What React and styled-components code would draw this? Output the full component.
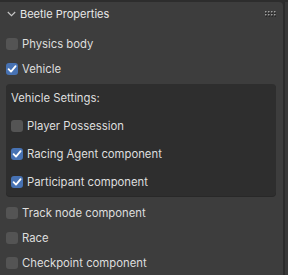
import React, { useState } from 'react';
import styled, { createGlobalStyle } from 'styled-components';

const GlobalStyle = createGlobalStyle`
  html, body {
    margin: 0;
    padding: 0;
    background: #2d2d2d;
  }
  body {
    font-family: Inter, "Noto Sans", "DejaVu Sans", sans-serif;
    -webkit-font-smoothing: antialiased;
  }
`;

const Page = styled.div`
  display: flex;
  width: 288px;
  height: 275px;
  padding-top: 2px;
  box-sizing: border-box;
  overflow: hidden;
  background: #2d2d2d;
`;

const Panel = styled.div`
  width: 283px;
  background: #3d3d3d;
  border-top-right-radius: 4px;
  display: flex;
  flex-direction: column;
`;

const Scrollbar = styled.div`
  flex: 1;
  border-left: 2px solid #2b2b2b;
  background: #383838;
`;

const Header = styled.div`
  display: flex;
  align-items: center;
  height: 29px;
  padding: 0 6px 0 7px;
  color: #e8e8e8;
  font-size: 11px;
  cursor: pointer;
`;

const HeaderTitle = styled.span`
  flex: 1;
  margin-left: 4px;
`;

const Body = styled.div`
  display: flex;
  flex-direction: column;
  padding: 5px 7px 0 6px;
`;

const Row = styled.label`
  display: flex;
  align-items: center;
  gap: 4px;
  height: ${(p) => (p.$tall ? 28 : 25)}px;
  color: #dedede;
  font-size: 11.3px;
  cursor: pointer;
`;

const Box = styled.div`
  display: flex;
  flex-direction: column;
  margin: 3px 0 4px;
  padding: 0 5px;
  background: #2e2e2e;
  border-radius: 4px;
  box-shadow: 0 1px 0 #282828;
`;

const BoxTitle = styled.div`
  display: flex;
  align-items: center;
  height: 28px;
  color: #dedede;
  font-size: 11.3px;
`;

const Check = styled.span`
  display: inline-flex;
  align-items: center;
  justify-content: center;
  width: 12px;
  height: 12px;
  border-radius: 3px;
  background: ${(p) => (p.$on ? '#4772b3' : '#545454')};
  flex-shrink: 0;
`;

function Chevron() {
  return (
    <svg width="9" height="6" viewBox="0 0 9 6">
      <path d="M0.8 1 L4.5 4.7 L8.2 1" fill="none" stroke="#c8c8c8" strokeWidth="1.1" />
    </svg>
  );
}

function Grip() {
  const dots = [];
  for (let c = 0; c < 4; c++) {
    for (let r = 0; r < 2; r++) {
      dots.push(
        <g key={`${c}-${r}`}>
          <rect x={c * 3 + 0.5} y={r * 3 + 1} width="1.5" height="1.5" fill="#161616" />
          <rect x={c * 3} y={r * 3} width="1.5" height="1.5" fill="#a0a0a0" />
        </g>
      );
    }
  }
  return (
    <svg width="12" height="7" viewBox="0 0 12 7">
      {dots}
    </svg>
  );
}

function Checkbox({ label, checked, onToggle, tall }) {
  return (
    <Row $tall={tall} onClick={onToggle}>
      <Check $on={checked}>
        {checked && (
          <svg width="12" height="12" viewBox="0 0 12 12">
            <path d="M2.6 6.2 L5 8.6 L9.6 3.2" fill="none" stroke="#fff" strokeWidth="1.8" strokeLinecap="round" strokeLinejoin="round" />
          </svg>
        )}
      </Check>
      {label}
    </Row>
  );
}

export default function App() {
  const [props, setProps] = useState({
    physics: false,
    vehicle: true,
    player: false,
    racing: true,
    participant: true,
    track: false,
    race: false,
    checkpoint: false,
  });

  const toggle = (key) => () => setProps({ ...props, [key]: !props[key] });

  return (
    <>
      <GlobalStyle />
      <Page>
        <Panel>
          <Header>
            <Chevron />
            <HeaderTitle>Beetle Properties</HeaderTitle>
            <Grip />
          </Header>
          <Body>
            <Checkbox label="Physics body" checked={props.physics} onToggle={toggle('physics')} />
            <Checkbox label="Vehicle" checked={props.vehicle} onToggle={toggle('vehicle')} />
            {props.vehicle && (
              <Box>
                <BoxTitle>Vehicle Settings:</BoxTitle>
                <Checkbox tall label="Player Possession" checked={props.player} onToggle={toggle('player')} />
                <Checkbox tall label="Racing Agent component" checked={props.racing} onToggle={toggle('racing')} />
                <Checkbox tall label="Participant component" checked={props.participant} onToggle={toggle('participant')} />
              </Box>
            )}
            <Checkbox label="Track node component" checked={props.track} onToggle={toggle('track')} />
            <Checkbox label="Race" checked={props.race} onToggle={toggle('race')} />
            <Checkbox label="Checkpoint component" checked={props.checkpoint} onToggle={toggle('checkpoint')} />
          </Body>
        </Panel>
        <Scrollbar />
      </Page>
    </>
  );
}
